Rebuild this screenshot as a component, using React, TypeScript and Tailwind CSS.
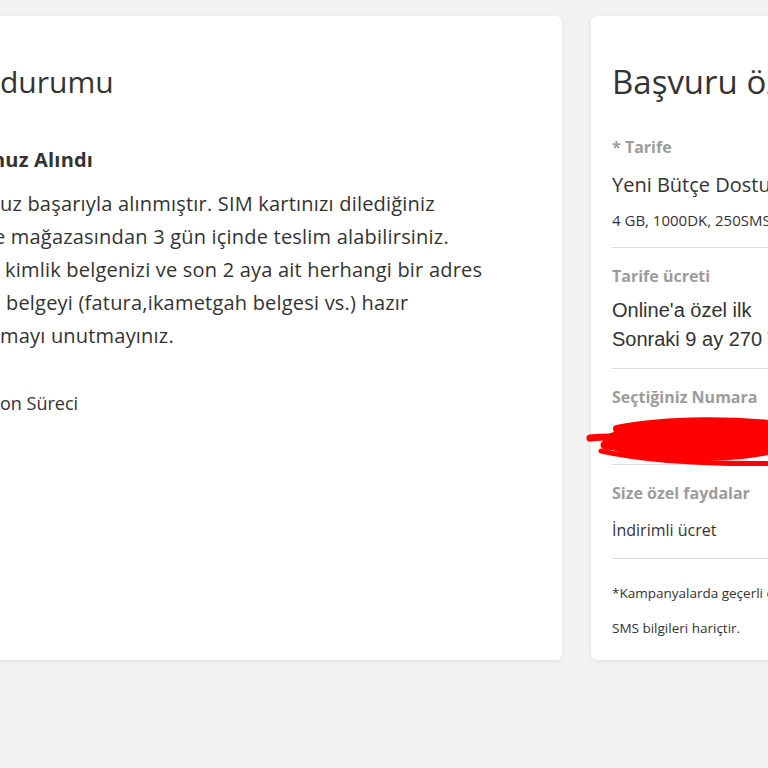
const body = { fontFamily: "'Open Sans', Lato, sans-serif" };
const arial = { fontFamily: "'Liberation Sans', Arial, sans-serif" };

function Divider({ className = "" }: { className?: string }) {
  return <div className={`h-px bg-[#dcdcdc] ${className}`} />;
}

function Label({ children, className = "" }: { children: React.ReactNode; className?: string }) {
  return (
    <div className={`text-[16px] leading-[20px] font-bold text-[#9c9c9c] whitespace-nowrap ${className}`}>
      {children}
    </div>
  );
}

function Scribble() {
  return (
    <svg
      className="absolute left-[-25px] top-0 overflow-visible"
      width="210"
      height="62"
      viewBox="0 0 210 62"
      fill="none"
    >
      <ellipse cx="112" cy="34" rx="96" ry="20" fill="#ff0000" />
      <path d="M3 31 C 20 29, 40 30, 62 32" stroke="#ff0000" strokeWidth="7" strokeLinecap="round" />
      <path d="M14 44 C 60 54, 130 58, 208 56" stroke="#ff0000" strokeWidth="5" strokeLinecap="round" />
      <path d="M18 38 C 60 42, 130 44, 208 40" stroke="#ff0000" strokeWidth="9" strokeLinecap="round" />
      <path d="M30 22 C 80 12, 150 12, 208 20" stroke="#ff0000" strokeWidth="8" strokeLinecap="round" />
    </svg>
  );
}

export default function App() {
  return (
    <div className="w-[768px] h-[768px] bg-[#f2f2f2] overflow-hidden text-[#333333]" style={body}>
      <div className="flex items-start gap-[29px] pt-4 -ml-[40px]">
        {/* Başvuru durumu */}
        <div className="w-[602px] h-[644px] flex-none bg-white rounded-md shadow-[0_1px_4px_rgba(0,0,0,0.08)] pl-[40px] pt-[46px]">
          <h1 className="text-[30px] leading-[40px] font-normal text-[#333] whitespace-nowrap">durumu</h1>
          <div className="mt-[46px] text-[20px] leading-[24px] font-bold tracking-[0.2px] whitespace-nowrap -ml-[8px]">
            nuz Alındı
          </div>
          <div className="mt-[15px] text-[20px] leading-[33px] tracking-[0.2px] whitespace-nowrap">
            <div>uz başarıyla alınmıştır. SIM kartınızı dilediğiniz</div>
            <div className="-ml-[6px]">e mağazasından 3 gün içinde teslim alabilirsiniz.</div>
            <div className="pl-[5px]">kimlik belgenizi ve son 2 aya ait herhangi bir adres</div>
            <div className="pl-[6px]">belgeyi (fatura,ikametgah belgesi vs.) hazır</div>
            <div>mayı unutmayınız.</div>
          </div>
          <div className="mt-[35px] text-[18px] leading-[33px] whitespace-nowrap">on Süreci</div>
        </div>

        {/* Başvuru özeti */}
        <div className="w-[400px] flex-none bg-white rounded-md shadow-[0_1px_4px_rgba(0,0,0,0.08)] pl-[21px] pt-[46px] pb-[23px]">
          <h1 className="text-[33px] leading-[40px] font-normal text-[#333] whitespace-nowrap">Başvuru özeti</h1>

          <Label className="mt-[35px]">* Tarife</Label>
          <div className="mt-[15px] text-[20px] leading-[26px] whitespace-nowrap">Yeni Bütçe Dostu Tarifesi</div>
          <div className="mt-[12px] text-[15px] leading-[20px] whitespace-nowrap">4 GB, 1000DK, 250SMS</div>
          <Divider className="mt-[17px]" />

          <Label className="mt-[18px]">Tarife ücreti</Label>
          <div className="mt-[10px] text-[20px] leading-[29px] text-[#333] whitespace-nowrap" style={arial}>
            <div>Online'a özel ilk</div>
            <div>Sonraki 9 ay 270 TL</div>
          </div>
          <Divider className="mt-[14px]" />

          <Label className="mt-[18px]">Seçtiğiniz Numara</Label>
          <div className="relative h-[57px]">
            <div className="pt-[18px] text-[19px] leading-[26px] whitespace-nowrap">0 5XX XXX XX XX</div>
            <Scribble />
          </div>
          <Divider />

          <Label className="mt-[18px]">Size özel faydalar</Label>
          <div className="mt-[16px] text-[16px] leading-[22px] whitespace-nowrap">İndirimli ücret</div>
          <Divider className="mt-[17px]" />

          <div className="mt-[25px] text-[13.5px] leading-[18px] whitespace-nowrap">*Kampanyalarda geçerli olan</div>
          <div className="mt-[17px] text-[13.5px] leading-[18px] whitespace-nowrap">SMS bilgileri hariçtir.</div>
        </div>
      </div>
    </div>
  );
}
